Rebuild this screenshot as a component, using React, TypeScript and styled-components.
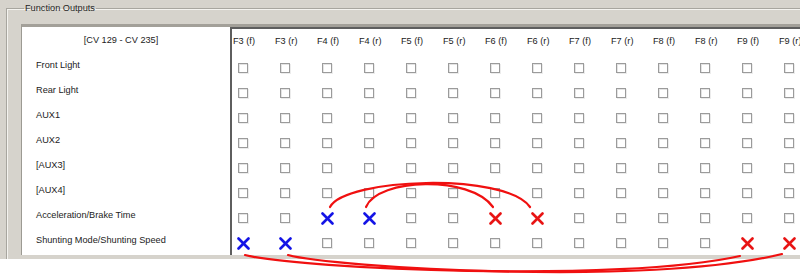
// Function Outputs

// ___________________________________________________________________

import * as React from 'react'
import styled, { createGlobalStyle } from 'styled-components'

// ___________________________________________________________________

const rows = [
  'Front Light',
  'Rear Light',
  'AUX1',
  'AUX2',
  '[AUX3]',
  '[AUX4]',
  'Acceleration/Brake Time',
  'Shunting Mode/Shunting Speed',
]

const columns = [3, 4, 5, 6, 7, 8, 9].flatMap(n => [`F${n} (f)`, `F${n} (r)`])

type Mark = 'blue' | 'red'

const marks: Record<string, Mark> = {
  '6-2': 'blue',
  '6-3': 'blue',
  '6-6': 'red',
  '6-7': 'red',
  '7-0': 'blue',
  '7-1': 'blue',
  '7-12': 'red',
  '7-13': 'red',
}

const markColors: Record<Mark, string> = {
  blue: '#1414e6',
  red: '#e81414',
}

// ___________________________________________________________________

const Cross = ({ tone }: { tone: Mark }) => (
  <CrossSVG viewBox="0 0 13 13">
    <line x1="1.5" y1="1.5" x2="11.5" y2="11.5" stroke={markColors[tone]} />
    <line x1="11.5" y1="1.5" x2="1.5" y2="11.5" stroke={markColors[tone]} />
  </CrossSVG>
)

const Arcs = () => (
  <Overlay viewBox="0 0 800 277">
    <path d="M330 207 C 345 178, 505 172, 530 207" />
    <path d="M366 207 C 378 178, 470 175, 493 207" />
    <path d="M245 255 C 300 269, 620 283, 740 256" />
    <path d="M288 255 C 330 267, 650 287, 782 254" />
  </Overlay>
)

const App = () => (
  <>
    <GlobalStyle />
    <Page>
      <Window>
        <Group>
          <Legend>Function Outputs</Legend>
          <Panel>
            <Labels>
              <LabelHead>[CV 129 - CV 235]</LabelHead>
              {rows.map(r => (
                <Label key={r}>{r}</Label>
              ))}
            </Labels>
            <Grid>
              {columns.map(c => (
                <Head key={c}>{c}</Head>
              ))}
              {rows.map((r, ri) =>
                columns.map((c, ci) => {
                  const mark = marks[`${ri}-${ci}`]
                  return (
                    <Cell key={`${r}-${c}`}>
                      {mark ? <Cross tone={mark} /> : <Box />}
                    </Cell>
                  )
                })
              )}
            </Grid>
          </Panel>
        </Group>
      </Window>
      <Arcs />
    </Page>
  </>
)

export default App

// ___________________________________________________________________

const GlobalStyle = createGlobalStyle`
  html, body {
    margin: 0;
    padding: 0;
    background: #ffffff;
  }
  body {
    font-family: "Liberation Sans", Arial, sans-serif;
  }
`

const Page = styled.div`
  position: relative;
  width: 800px;
  height: 277px;
  overflow: hidden;
  background: #ffffff;
`

const Window = styled.div`
  height: 259px;
  overflow: hidden;
  background: #d6d3cc;
  padding: 2px 0 0 6px;
  box-sizing: border-box;
`

const Group = styled.fieldset`
  margin: 0;
  width: 900px;
  height: 400px;
  padding: 10px 0 0 15px;
  box-sizing: border-box;
  border: 1px solid #a8a69f;
  box-shadow: inset 1px 1px 0 #f4f3ef;
`

const Legend = styled.legend`
  padding: 0 1px;
  margin-left: 2px;
  font-size: 9.2px;
  line-height: 12px;
  color: #262626;
`

const Panel = styled.div`
  display: flex;
  background: #ffffff;
  border-top: 3px solid #a3a099;
  border-left: 1px solid #9c9a93;
  margin-left: -1px;
`

const Labels = styled.div`
  width: 208px;
  flex: none;
  display: flex;
  flex-direction: column;
`

const LabelHead = styled.div`
  height: 28px;
  display: flex;
  align-items: center;
  justify-content: center;
  padding: 0 10px 2px 0;
  box-sizing: border-box;
  font-size: 9.2px;
  color: #222222;
`

const Label = styled.div`
  height: 25px;
  display: flex;
  align-items: center;
  padding: 0 0 5px 14px;
  box-sizing: border-box;
  font-size: 9.2px;
  color: #222222;
  white-space: nowrap;
`

const Grid = styled.div`
  display: grid;
  grid-template-columns: repeat(14, 42px);
  grid-template-rows: 26px;
  grid-auto-rows: 25px;
  border-top: 2px solid #5e5e5e;
  border-left: 2px solid #5e5e5e;
`

const Head = styled.div`
  display: flex;
  align-items: center;
  padding: 0 0 2px 1px;
  font-size: 9.2px;
  color: #222222;
  white-space: nowrap;
`

const Cell = styled.div`
  display: flex;
  align-items: center;
  padding-left: 5px;
`

const Box = styled.span`
  display: block;
  width: 10px;
  height: 10px;
  box-sizing: border-box;
  margin-left: 1px;
  border: 1px solid #9b9b9b;
  background: #ffffff;
  box-shadow: inset 1px 1px 0 #e4e4e4, 1px 1px 0 #ececec;
`

const CrossSVG = styled.svg`
  width: 13px;
  height: 13px;
  margin-top: 2px;
  line {
    stroke-width: 2.6;
    stroke-linecap: round;
  }
`

const Overlay = styled.svg`
  position: absolute;
  left: 0;
  top: 0;
  width: 800px;
  height: 277px;
  pointer-events: none;
  path {
    fill: none;
    stroke: #f01010;
    stroke-width: 2.2;
    stroke-linecap: round;
  }
`
